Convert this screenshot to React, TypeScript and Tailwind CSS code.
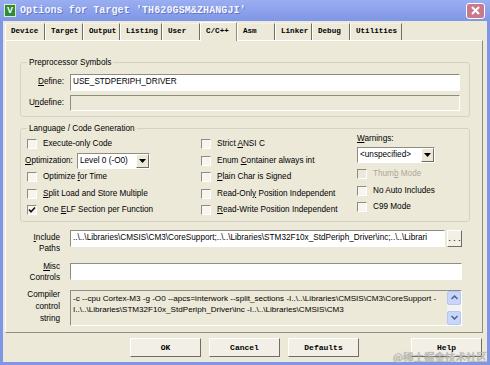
import React from "react";

const ui = { fontFamily: '"Liberation Sans", Arial, sans-serif' };
const mono = { fontFamily: '"Liberation Mono", "Courier New", monospace' };

const Check = ({ checked, disabled }: { checked?: boolean; disabled?: boolean }) => (
  <span
    className={
      "w-[10px] h-[10px] shrink-0 flex items-center justify-center border border-t-[#8f8d82] border-l-[#8f8d82] border-b-white border-r-white " +
      (disabled ? "bg-[#ece9d8]" : "bg-[#f6f5f0]")
    }
  >
    {checked && (
      <svg width="8" height="8" viewBox="0 0 8 8">
        <path d="M1 3.5 L3 5.8 L7 1.5" stroke="#111" strokeWidth="1.6" fill="none" />
      </svg>
    )}
  </span>
);

const CheckRow = ({ children, checked, disabled }: { children: React.ReactNode; checked?: boolean; disabled?: boolean }) => (
  <div className={"h-[16.5px] flex items-center gap-[6px] " + (disabled ? "text-[#aca899]" : "text-black")}>
    <Check checked={checked} disabled={disabled} />
    <span className="leading-none">{children}</span>
  </div>
);

const Arrow = () => (
  <span className="w-[13px] h-full flex items-center justify-center bg-[#ece9d8] border border-t-white border-l-white border-b-[#6f6d63] border-r-[#6f6d63]">
    <svg width="7" height="4" viewBox="0 0 7 4">
      <path d="M0 0 H7 L3.5 4 Z" fill="#000" />
    </svg>
  </span>
);

const Select = ({ value, w }: { value: string; w: string }) => (
  <div className={"h-[16px] flex bg-white border border-t-[#8f8d82] border-l-[#8f8d82] border-b-white border-r-white " + w}>
    <span className="flex-1 pl-[2px] flex items-center leading-none">{value}</span>
    <Arrow />
  </div>
);

const sunken = "border border-t-[#8f8d82] border-l-[#8f8d82] border-b-white border-r-white";

const Tab = ({ label, w, active }: { label: string; w: string; active?: boolean }) =>
  active ? (
    <div className={"h-[19px] -mt-[2px] pl-[5px] flex items-start pt-[3px] bg-[#ece9d8] border-t border-l border-r border-t-white border-l-white border-r-[#8f8d82] relative z-10 -mb-[1px] " + w}>
      {label}
    </div>
  ) : (
    <div className={"h-[17px] pl-[5px] flex items-center border-l border-r border-t border-l-white border-t-[#f4f2ea] border-r-[#6f6d63] " + w}>
      {label}
    </div>
  );

const Button = ({ label, className = "" }: { label: string; className?: string }) => (
  <div
    style={mono}
    className={
      "w-[71px] h-[19px] flex items-center justify-center text-[8px] font-bold bg-[#f1efe6] border border-t-white border-l-white border-b-[#6f6d63] border-r-[#6f6d63] " +
      className
    }
  >
    {label}
  </div>
);

export default function App() {
  return (
    <div style={ui} className="w-[490px] h-[365px] bg-[#7f96e6] flex flex-col overflow-hidden relative text-[8.2px] text-black">
      {/* title bar */}
      <div className="h-[21px] flex items-center px-[4px] bg-gradient-to-b from-[#9aaef1] to-[#7f96e6]">
        <div className="w-[12px] h-[13px] bg-[#2f8a3a] border border-[#d8ecd0] flex items-center justify-center text-white text-[9px] font-bold leading-none" style={ui}>
          V
        </div>
        <div style={mono} className="ml-[4px] text-[10px] font-bold text-[#f4f6ff] tracking-[0.1px] [text-shadow:1px_1px_0_#6277c6]">
          Options for Target 'TH620GSM&amp;ZHANGJI'
        </div>
        <div className="ml-auto mr-[1px] w-[19px] h-[16px] rounded-[3px] border border-white bg-[#c9798c] flex items-center justify-center">
          <svg width="9" height="9" viewBox="0 0 9 9">
            <path d="M1 1 L8 8 M8 1 L1 8" stroke="#fff" strokeWidth="2" />
          </svg>
        </div>
      </div>

      {/* body */}
      <div className="flex-1 mx-[3px] mb-[3px] bg-[#ece9d8] flex flex-col">
        {/* tabs */}
        <div style={mono} className="mt-[2px] pl-[2px] flex items-end text-[7.6px] font-bold h-[17px]">
          <Tab label="Device" w="w-[40px]" />
          <Tab label="Target" w="w-[38px]" />
          <Tab label="Output" w="w-[37px]" />
          <Tab label="Listing" w="w-[42px]" />
          <Tab label="User" w="w-[38px]" />
          <Tab label="C/C++" w="w-[37px]" active />
          <Tab label="Asm" w="w-[38px]" />
          <Tab label="Linker" w="w-[37px]" />
          <Tab label="Debug" w="w-[38px]" />
          <Tab label="Utilities" w="w-[52px]" />
        </div>

        {/* panel */}
        <div className="ml-[2px] w-[478px] h-[293px] border border-t-white border-l-white border-b-[#8f8d82] border-r-[#8f8d82] pt-[16px] px-[14px] flex flex-col">
          {/* Preprocessor Symbols */}
          <fieldset className="w-[450px] border border-[#d4d2c4] rounded-[3px] pb-[5px]">
            <legend className="ml-[6px] px-[2px] leading-[11px]">Preprocessor Symbols</legend>
            <div className="mt-[6px] flex items-center">
              <span className="w-[44px] text-right pr-[1px]"><u>D</u>efine:</span>
              <div className={"ml-[5px] w-[390px] h-[17px] bg-white flex items-center pl-[2px] " + sunken}>USE_STDPERIPH_DRIVER</div>
            </div>
            <div className="mt-[4px] flex items-center">
              <span className="w-[44px] text-right pr-[1px]">U<u>n</u>define:</span>
              <div className={"ml-[5px] w-[390px] h-[16px] bg-[#ece9d8] " + sunken}></div>
            </div>
          </fieldset>

          {/* Language / Code Generation */}
          <fieldset className="mt-[6px] w-[450px] border border-[#d4d2c4] rounded-[3px] pb-[2px]">
            <legend className="ml-[6px] px-[2px] leading-[11px]">Language / Code Generation</legend>
            <div className="flex pt-[2px]">
              <div className="w-[180px] pl-[6px] flex flex-col">
                <CheckRow>Execute-only Code</CheckRow>
                <div className="h-[16.5px] flex items-center -ml-[2px]">
                  <span className="w-[52px]"><u>O</u>ptimization:</span>
                  <Select value="Level 0 (-O0)" w="w-[73px]" />
                </div>
                <CheckRow>Optimize <u>f</u>or Time</CheckRow>
                <CheckRow><u>S</u>plit Load and Store Multiple</CheckRow>
                <CheckRow checked>One <u>E</u>LF Section per Function</CheckRow>
              </div>
              <div className="w-[156px] flex flex-col">
                <CheckRow>Strict <u>A</u>NSI C</CheckRow>
                <CheckRow>Enum <u>C</u>ontainer always int</CheckRow>
                <CheckRow><u>P</u>lain Char is Signed</CheckRow>
                <CheckRow>Read-Onl<u>y</u> Position Independent</CheckRow>
                <CheckRow><u>R</u>ead-Write Position Independent</CheckRow>
              </div>
              <div className="flex-1 flex flex-col -mt-[3px]">
                <span className="h-[11px] leading-[11px]"><u>W</u>arnings:</span>
                <div className="mt-[3px]">
                  <Select value="<unspecified>" w="w-[78px]" />
                </div>
                <div className="mt-[3px]">
                  <CheckRow disabled>Thum<u>b</u> Mode</CheckRow>
                  <CheckRow>No Auto Includes</CheckRow>
                  <CheckRow>C99 Mode</CheckRow>
                </div>
              </div>
            </div>
          </fieldset>

          {/* Include Paths */}
          <div className="mt-[8px] flex items-start">
            <div className="w-[40px] text-right leading-[11px] mt-[2px]">
              <div><u>I</u>nclude</div>
              <div>Paths</div>
            </div>
            <div className={"ml-[10px] w-[375px] h-[17px] bg-white flex items-center pl-[2px] overflow-hidden whitespace-nowrap text-[8.2px] " + sunken}>
              ..\..\Libraries\CMSIS\CM3\CoreSupport;..\..\Libraries\STM32F10x_StdPeriph_Driver\inc;..\..\Librari
            </div>
            <div style={mono} className="ml-[2px] w-[15px] h-[17px] flex items-end justify-center pb-[3px] text-[8px] leading-none bg-[#f1efe6] border border-t-white border-l-white border-b-[#6f6d63] border-r-[#6f6d63]">
              ...
            </div>
          </div>

          {/* Misc Controls */}
          <div className="mt-[7px] flex items-center">
            <div className="w-[40px] text-right leading-[11px]">
              <div><u>M</u>isc</div>
              <div>Controls</div>
            </div>
            <div className={"ml-[10px] w-[392px] h-[17px] bg-white " + sunken}></div>
          </div>

          {/* Compiler control string */}
          <div className="mt-[7px] flex items-start">
            <div className="w-[40px] text-right leading-[12px] -mt-[1px]">
              <div>Compiler</div>
              <div>control</div>
              <div>string</div>
            </div>
            <div className={"ml-[10px] w-[392px] h-[36px] bg-[#ece9d8] flex " + sunken}>
              <div className="flex-1 pl-[2px] pt-[2px] leading-[11px] whitespace-nowrap overflow-hidden text-[8.1px]">
                <div>-c --cpu Cortex-M3 -g -O0 --apcs=interwork --split_sections -I..\..\Libraries\CMSIS\CM3\CoreSupport -</div>
                <div>I..\..\Libraries\STM32F10x_StdPeriph_Driver\inc -I..\..\Libraries\CMSIS\CM3</div>
              </div>
              <div className="w-[14px] flex flex-col bg-[#f3f3ee]">
                <div className="h-[14px] bg-[#c7d6fa] border border-[#b4c6f4] rounded-[2px] flex items-center justify-center">
                  <svg width="7" height="5" viewBox="0 0 7 5">
                    <path d="M0.5 4 L3.5 1 L6.5 4" stroke="#4d6185" strokeWidth="1.5" fill="none" />
                  </svg>
                </div>
                <div className="flex-1" />
                <div className="h-[14px] bg-[#c7d6fa] border border-[#b4c6f4] rounded-[2px] flex items-center justify-center">
                  <svg width="7" height="5" viewBox="0 0 7 5">
                    <path d="M0.5 1 L3.5 4 L6.5 1" stroke="#4d6185" strokeWidth="1.5" fill="none" />
                  </svg>
                </div>
              </div>
            </div>
          </div>
        </div>

        {/* buttons */}
        <div className="mt-[5px] pl-[127px] flex gap-[8px]">
          <Button label="OK" />
          <Button label="Cancel" />
          <Button label="Defaults" />
          <Button label="Help" className="ml-[44px]" />
        </div>
      </div>

      <div
        style={{ fontFamily: '"Noto Sans CJK SC", "Liberation Sans", sans-serif' }}
        className="absolute right-[3px] bottom-[3px] text-[10.5px] leading-none text-[#c4c4c4]/90 [text-shadow:0_0_1px_#888]"
      >
        @稀土掘金技术社区
      </div>
    </div>
  );
}
